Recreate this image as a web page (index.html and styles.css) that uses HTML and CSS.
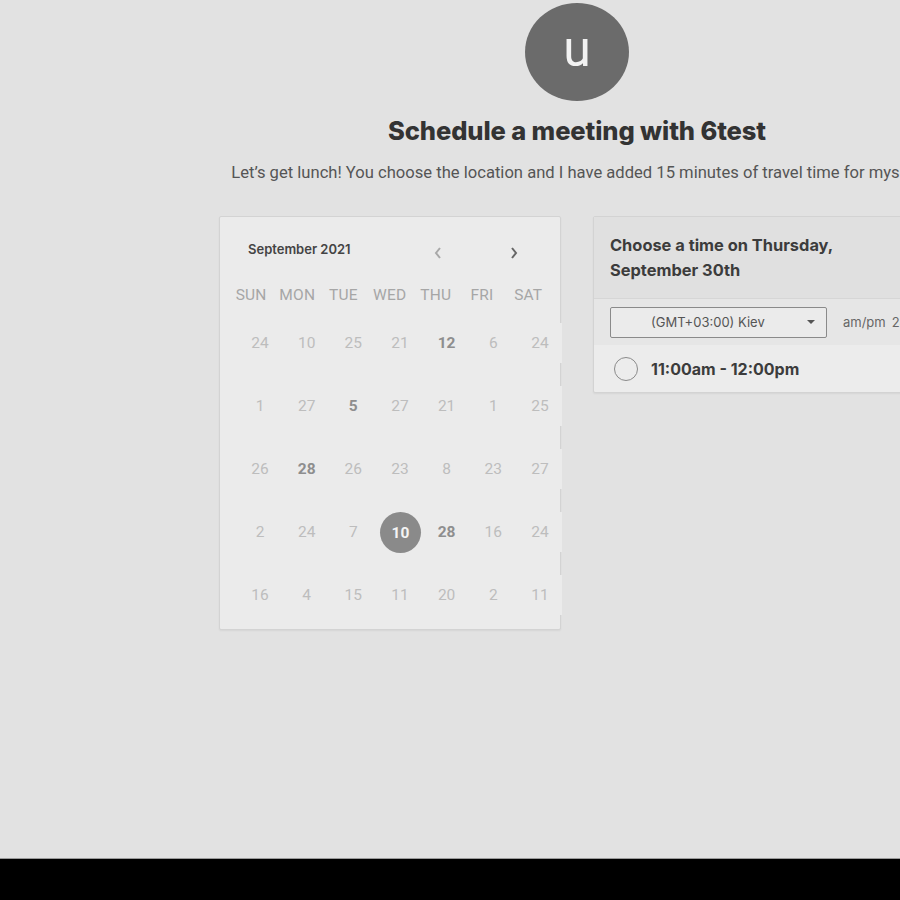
FILE: index.html
```html
<!DOCTYPE html>
<html>
<head>
<meta charset="utf-8">
<link rel="stylesheet" href="styles.css">
</head>
<body>
<div class="viewport">
  <div class="page">
    <div class="avatar">u</div>
    <h1 class="title">Schedule a meeting with 6test</h1>
    <p class="subtitle">Let’s get lunch! You choose the location and I have added 15 minutes of travel time for myself.</p>
    <div class="cards">
      <div class="card calendar">
        <div class="cal-head">
          <span class="month">September 2021</span>
          <span class="arrow prev">
            <svg width="10" height="14" viewBox="0 0 10 14"><path d="M7 2 L3 7 L7 12" fill="none" stroke="#a8a8a8" stroke-width="2"/></svg>
          </span>
          <span class="arrow next">
            <svg width="10" height="14" viewBox="0 0 10 14"><path d="M3 2 L7 7 L3 12" fill="none" stroke="#666" stroke-width="2"/></svg>
          </span>
        </div>
        <div class="weekdays">
          <span>SUN</span><span>MON</span><span>TUE</span><span>WED</span><span>THU</span><span>FRI</span><span>SAT</span>
        </div>
        <div class="days">
          <span>24</span><span>10</span><span>25</span><span>21</span><span class="avail">12</span><span>6</span><span>24</span>
          <span>1</span><span>27</span><span class="avail">5</span><span>27</span><span>21</span><span>1</span><span>25</span>
          <span>26</span><span class="avail">28</span><span>26</span><span>23</span><span>8</span><span>23</span><span>27</span>
          <span>2</span><span>24</span><span>7</span><span class="selected">10</span><span class="avail">28</span><span>16</span><span>24</span>
          <span>16</span><span>4</span><span>15</span><span>11</span><span>20</span><span>2</span><span>11</span>
        </div>
      </div>
      <div class="card times">
        <div class="times-head">Choose a time on Thursday,<br>September 30th</div>
        <div class="tz-row">
          <div class="tz-select">
            <span>(GMT+03:00) Kiev</span>
            <svg class="caret" width="8" height="5" viewBox="0 0 8 5"><path d="M0 0 H8 L4 4 Z" fill="#555"/></svg>
          </div>
          <span class="fmt">am/pm</span><span class="fmt">24h</span>
        </div>
        <div class="slot">
          <span class="radio"></span>
          <span class="slot-text">11:00am - 12:00pm</span>
        </div>
      </div>
    </div>
  </div>
</div>
<div class="bottom-bar"></div>
</body>
</html>
```
FILE: styles.css
```css
html, body {
  margin: 0;
  padding: 0;
  width: 900px;
  height: 900px;
  overflow: hidden;
  background: #000;
}
.viewport {
  height: 858px;
  background: #e2e2e2;
  overflow: hidden;
  border-bottom: 1px solid #9a9a9a;
}
.page {
  width: 1154px;
  display: flex;
  flex-direction: column;
  align-items: center;
  padding-top: 3px;
  font-family: Roboto, "Liberation Sans", sans-serif;
}
.avatar {
  width: 104px;
  height: 92px;
  padding-bottom: 6px;
  box-sizing: content-box;
  border-radius: 50%;
  background: #6b6b6b;
  color: #f2f2f2;
  font-family: Roboto, sans-serif;
  font-size: 50px;
  font-weight: 400;
  display: flex;
  align-items: center;
  justify-content: center;
  line-height: 1;
}
.title {
  margin: 15px 0 0 0;
  font-family: Inter, sans-serif;
  font-weight: 800;
  font-size: 25.5px;
  line-height: 30px;
  color: #333;
  letter-spacing: -0.1px;
}
.subtitle {
  margin: 17px 0 0 0;
  font-size: 16.6px;
  line-height: 20px;
  color: #555;
  white-space: nowrap;
  font-weight: 400;
}
.cards {
  display: flex;
  gap: 32px;
  margin-top: 33px;
  align-items: flex-start;
}
.card {
  width: 342px;
  box-sizing: border-box;
  border: 1px solid #d3d3d3;
  border-radius: 2px;
  box-shadow: 0 1px 2px rgba(0,0,0,0.06);
}
.calendar {
  background: #ebebeb;
  height: 414px;
  padding: 0;
}
.cal-head {
  display: flex;
  align-items: center;
  height: 64px;
  padding-left: 28px;
}
.month {
  font-family: Inter, sans-serif;
  font-weight: 600;
  font-size: 13px;
  color: #444;
  width: 185px;
}
.arrow {
  display: flex;
  width: 10px;
  height: 14px;
  margin-top: 8px;
}
.next { margin-left: 66px; }
.weekdays {
  display: grid;
  grid-template-columns: repeat(7, 46.2px);
  padding-left: 8px;
  margin-top: 2px;
  height: 24px;
  align-items: center;
}
.weekdays span {
  text-align: center;
  font-size: 15.5px;
  color: #a6a6a6;
  letter-spacing: 0.2px;
}
.days {
  display: grid;
  grid-template-columns: repeat(7, 46.67px);
  grid-auto-rows: 40px;
  row-gap: 23px;
  padding-left: 17px;
  margin-top: 16px;
  width: 327px;
}
.days span {
  display: flex;
  align-items: center;
  justify-content: center;
  background: #ebebeb;
  font-size: 15.5px;
  color: #bdbdbd;
  width: 44px;
  height: 40px;
  margin-left: 1px;
}
.days span.avail {
  color: #8e8e8e;
  font-weight: 700;
}
.days span.selected {
  width: 41px;
  height: 41px;
  border-radius: 50%;
  background: #8a8a8a;
  color: #f4f4f4;
  font-weight: 700;
  margin-left: 3px;
}
.times {
  background: #ececec;
  overflow: hidden;
}
.times-head {
  background: #e0e0e0;
  font-family: Inter, sans-serif;
  font-weight: 700;
  font-size: 16.4px;
  line-height: 25px;
  color: #3c3c3c;
  padding: 16px 16px 15px 16px;
  border-bottom: 1px solid #d6d6d6;
}
.tz-row {
  background: #e6e6e6;
  display: flex;
  align-items: center;
  height: 46px;
  padding-left: 16px;
}
.tz-select {
  width: 217px;
  height: 31px;
  box-sizing: border-box;
  border: 1px solid #8a8a8a;
  border-radius: 2px;
  background: #ebebeb;
  display: flex;
  align-items: center;
  position: relative;
  font-family: Inter, sans-serif;
  font-size: 13px;
  color: #555;
}
.tz-select span {
  margin-left: 40px;
}
.caret {
  position: absolute;
  right: 11px;
  top: 12px;
}
.fmt {
  font-family: Inter, sans-serif;
  font-size: 13px;
  color: #666;
  margin-left: 16px;
}
.fmt + .fmt { margin-left: 6px; }
.slot {
  display: flex;
  align-items: center;
  height: 47px;
  padding-left: 20px;
}
.radio {
  width: 24px;
  height: 24px;
  border: 1.5px solid #8a8a8a;
  border-radius: 50%;
  box-sizing: border-box;
}
.slot-text {
  font-family: Inter, sans-serif;
  font-weight: 700;
  font-size: 16px;
  color: #3c3c3c;
  margin-left: 13px;
}
.bottom-bar {
  height: 41px;
  background: #000;
}
```
